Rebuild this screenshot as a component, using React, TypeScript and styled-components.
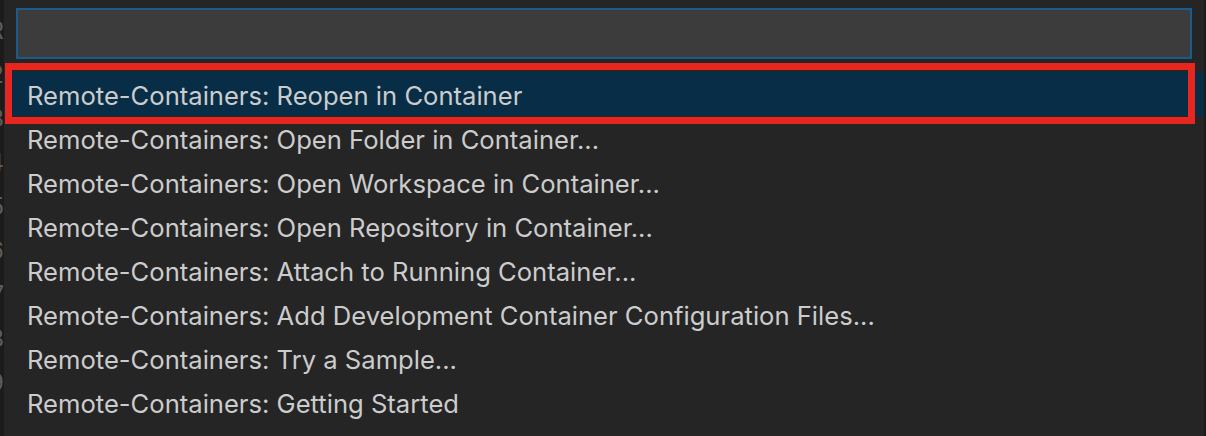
import React, { FC } from "react";
import styled, { createGlobalStyle } from "styled-components";

const GlobalStyle = createGlobalStyle`
  html, body {
    margin: 0;
    padding: 0;
    background: #1b1b1c;
  }
  * {
    box-sizing: border-box;
  }
`;

const Screen = styled.div`
  display: flex;
  width: 1206px;
  height: 436px;
  overflow: hidden;
  background-color: #1b1b1c; /* editor behind the quick pick */
  font-family: Inter, "Liberation Sans", sans-serif;
`;

// editor line numbers peeking out left of the quick pick
const Gutter = styled.div`
  display: flex;
  flex-direction: column;
  align-items: flex-end;
  width: 4px;
  flex-shrink: 0;
  padding-top: 16px;
  overflow: hidden;
`;

const GutterLine = styled.div`
  height: 44px;
  line-height: 30px;
  font-size: 24px;
  color: #5c5c5c;
  white-space: nowrap;
`;

const Panel = styled.div`
  display: flex;
  flex-direction: column;
  flex: 1;
  background-color: #252526;
  padding-top: 8px;
`;

const RightEdge = styled.div`
  width: 2px;
  flex-shrink: 0;
  background-color: #1b1b1c;
`;

const InputBox = styled.div`
  height: 51px;
  margin: 0 12px;
  background-color: #3c3c3c;
  border: 2px solid #1b5a8c;
`;

const List = styled.div`
  display: flex;
  flex-direction: column;
  margin-top: 13px;
`;

const Row = styled.div<{ $selected?: boolean }>`
  position: relative;
  display: flex;
  align-items: center;
  height: 44px;
  padding-left: 23px;
  padding-top: 2px;
  font-size: 25.6px;
  color: #cccccc;
  white-space: nowrap;
  background-color: ${(p) => (p.$selected ? "#082e47" : "transparent")};
`;

// red annotation frame drawn over the first entry
const Highlight = styled.div`
  position: absolute;
  top: -9px;
  bottom: -8px;
  left: 1px;
  right: 9px;
  border: 7px solid #e7271f;
  pointer-events: none;
`;

const commands = [
  "Reopen in Container",
  "Open Folder in Container...",
  "Open Workspace in Container...",
  "Open Repository in Container...",
  "Attach to Running Container...",
  "Add Development Container Configuration Files...",
  "Try a Sample...",
  "Getting Started",
];

const gutterLines = ["R", "2", "3", "4", "5", "6", "7", "8", "9"];

const App: FC = () => {
  return (
    <>
      <GlobalStyle />
      <Screen>
        <Gutter>
          {gutterLines.map((n) => (
            <GutterLine key={n}>{n}</GutterLine>
          ))}
        </Gutter>
        <Panel>
          <InputBox />
          <List>
            {commands.map((c, i) => (
              <Row key={c} $selected={i === 0}>
                {`Remote-Containers: ${c}`}
                {i === 0 && <Highlight />}
              </Row>
            ))}
          </List>
        </Panel>
        <RightEdge />
      </Screen>
    </>
  );
};

export default App;
